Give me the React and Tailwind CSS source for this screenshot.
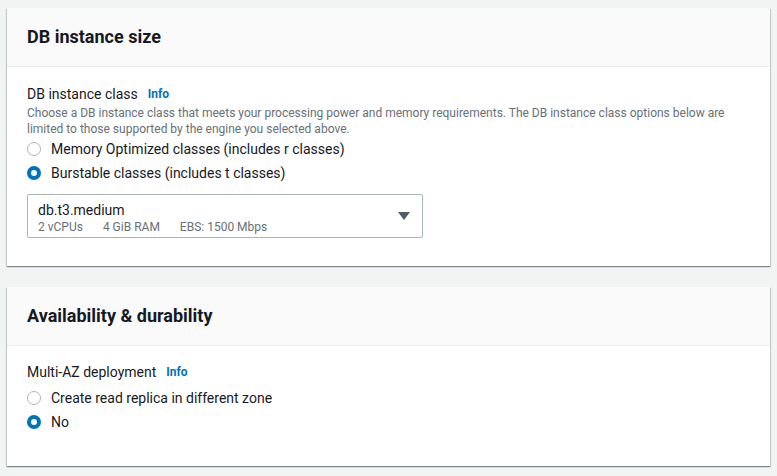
const font = { fontFamily: 'Roboto, "Open Sans", Arial, sans-serif' };

function Radio({ checked, label }) {
  return (
    <label className="flex items-center h-6 gap-[10px]">
      {checked ? (
        <span className="w-[14px] h-[14px] rounded-full border-[4px] border-[#0073bb] bg-white box-border" />
      ) : (
        <span className="w-[14px] h-[14px] rounded-full border border-[#aab7b8] bg-white box-border" />
      )}
      <span className="text-[14px] text-[#16191f]">{label}</span>
    </label>
  );
}

function Card({ title, children, bodyClass }) {
  return (
    <div className="bg-white mx-[7px] rounded-none shadow-[0_1px_1px_0_rgba(0,28,36,0.3),1px_1px_1px_0_rgba(0,28,36,0.15),-1px_1px_1px_0_rgba(0,28,36,0.15)]">
      <div className="h-[59px] bg-[#fafafa] border-b border-[#eaeded] flex items-center px-5">
        <h2 className="text-[18px] font-bold text-[#16191f] leading-none">{title}</h2>
      </div>
      <div className={bodyClass}>{children}</div>
    </div>
  );
}

export default function App() {
  return (
    <div className="w-[777px] h-[476px] bg-[#f2f3f3] pt-[8px] overflow-hidden" style={font}>
      <Card title="DB instance size" bodyClass="px-5 pt-[17px] h-[199px]">
        <div className="flex items-center gap-[10px] h-5">
          <span className="text-[14px] text-[#16191f]">DB instance class</span>
          <span className="text-[12px] font-bold text-[#0073bb]">Info</span>
        </div>
        <p className="text-[12px] leading-4 text-[#687078] mt-[1px] pr-4">
          Choose a DB instance class that meets your processing power and memory requirements. The DB instance class options below are limited to those supported by the engine you selected above.
        </p>
        <div className="flex flex-col">
          <Radio label="Memory Optimized classes (includes r classes)" />
          <Radio checked label="Burstable classes (includes t classes)" />
        </div>
        <div className="mt-[9px] w-[396px] h-[44px] border border-[#aab7b8] rounded-[2px] flex items-center pl-[10px] pr-[12px]">
          <div className="flex-1 flex flex-col pt-[4px]">
            <span className="text-[14px] leading-[18px] text-[#16191f]">db.t3.medium</span>
            <div className="flex gap-[20px] text-[12px] leading-4 text-[#687078]">
              <span>2 vCPUs</span>
              <span>4 GiB RAM</span>
              <span>EBS: 1500 Mbps</span>
            </div>
          </div>
          <svg width="12" height="8" viewBox="0 0 12 8">
            <path d="M0 0 L12 0 L6 8 Z" fill="#545b64" />
          </svg>
        </div>
      </Card>
      <div className="h-[21px]" />
      <Card title="Availability & durability" bodyClass="px-5 pt-[16px] h-[120px]">
        <div className="flex items-center gap-[10px] h-5">
          <span className="text-[14px] text-[#16191f]">Multi-AZ deployment</span>
          <span className="text-[12px] font-bold text-[#0073bb]">Info</span>
        </div>
        <div className="mt-[4px] flex flex-col">
          <Radio label="Create read replica in different zone" />
          <Radio checked label="No" />
        </div>
      </Card>
    </div>
  );
}
